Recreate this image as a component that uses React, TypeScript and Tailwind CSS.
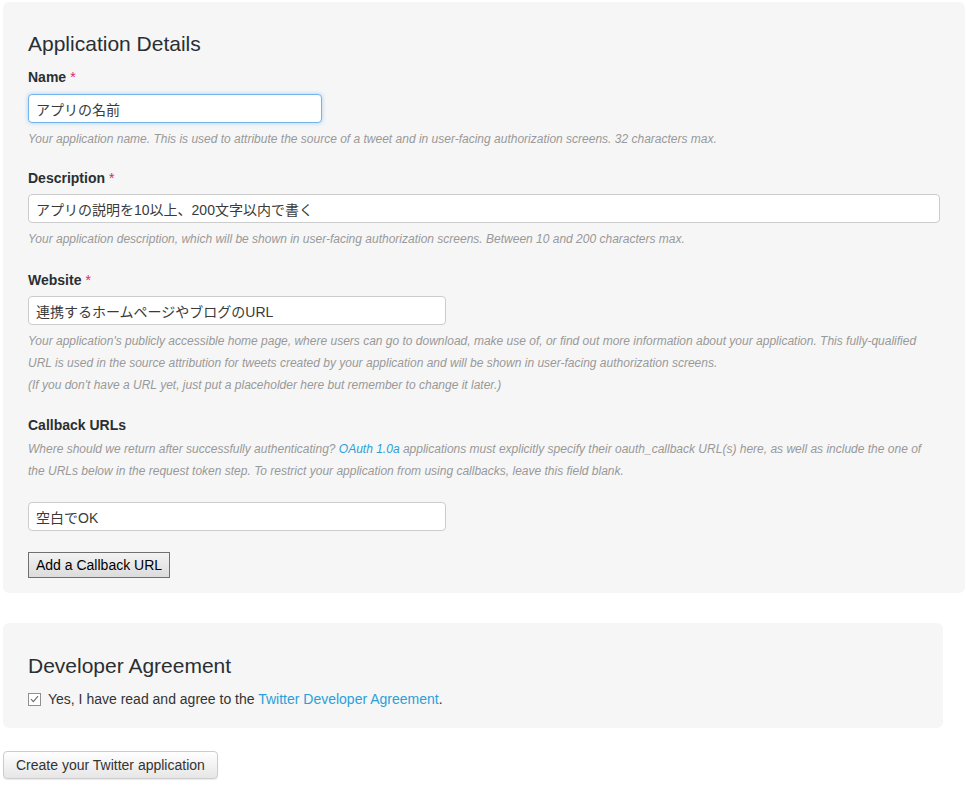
import * as React from "react";

const Label = ({ text, required }: { text: string; required?: boolean }) => (
  <div className="text-[14px] leading-[20px] font-bold text-[#292f33]">
    {text}
    {required && <span className="ml-[4px] font-normal text-[#e0245e]">*</span>}
  </div>
);

const TextBox = ({ value, width, focused }: { value: string; width: string; focused?: boolean }) => (
  <input
    type="text"
    readOnly
    value={value}
    className={`${width} block h-[29px] rounded-[4px] border bg-white px-[7px] text-[14px] text-[#3a3a3a] outline-none ${
      focused ? "border-[#74b4ec] shadow-[0_0_4px_rgba(102,175,233,0.55)]" : "border-[#cccccc]"
    }`}
  />
);

const Help = ({ children }: { children: React.ReactNode }) => (
  <p className="mt-[5px] text-[12px] leading-[22px] italic text-[#999999]">{children}</p>
);

export default function App() {
  return (
    <div className="min-h-screen bg-white pt-[2px] pl-[3px] font-['Liberation_Sans','Noto_Sans_CJK_JP',sans-serif]">
      <section className="w-[962px] rounded-[6px] bg-[#f6f6f6] px-[25px] pt-[30px] pb-[15px]">
        <h2 className="text-[21px] leading-[24px] text-[#292f33]">Application Details</h2>

        <div className="mt-[11px]">
          <Label text="Name" required />
          <div className="mt-[7px]">
            <TextBox value="アプリの名前" width="w-[294px]" focused />
          </div>
          <Help>
            Your application name. This is used to attribute the source of a tweet and in user-facing authorization screens. 32 characters max.
          </Help>
        </div>

        <div className="mt-[18px]">
          <Label text="Description" required />
          <div className="mt-[6px]">
            <TextBox value="アプリの説明を10以上、200文字以内で書く" width="w-full" />
          </div>
          <Help>
            Your application description, which will be shown in user-facing authorization screens. Between 10 and 200 characters max.
          </Help>
        </div>

        <div className="mt-[20px]">
          <Label text="Website" required />
          <div className="mt-[6px]">
            <TextBox value="連携するホームページやブログのURL" width="w-[418px]" />
          </div>
          <Help>
            Your application's publicly accessible home page, where users can go to download, make use of, or find out more information about your application. This fully-qualified
            <br />
            URL is used in the source attribution for tweets created by your application and will be shown in user-facing authorization screens.
            <br />
            (If you don't have a URL yet, just put a placeholder here but remember to change it later.)
          </Help>
        </div>

        <div className="mt-[19px]">
          <Label text="Callback URLs" />
          <p className="mt-[3px] text-[12px] leading-[22px] italic text-[#999999]">
            Where should we return after successfully authenticating?{" "}
            <a className="text-[#2b9fd9]">OAuth 1.0a</a> applications must explicitly specify their oauth_callback URL(s) here, as well as include the one of
            <br />
            the URLs below in the request token step. To restrict your application from using callbacks, leave this field blank.
          </p>
          <div className="mt-[20px]">
            <TextBox value="空白でOK" width="w-[418px]" />
          </div>
          <button className="mt-[21px] h-[26px] border border-[#707070] bg-gradient-to-b from-[#f3f3f3] to-[#dcdcdc] px-[7px] text-[14px] text-black">
            Add a Callback URL
          </button>
        </div>
      </section>

      <section className="mt-[30px] w-[940px] rounded-[6px] bg-[#f6f6f6] px-[25px] pt-[31px] pb-[19px]">
        <h2 className="text-[21px] leading-[24px] text-[#292f33]">Developer Agreement</h2>
        <div className="mt-[11px] flex items-center text-[14px] leading-[20px] text-[#333333]">
          <span className="flex h-[13px] w-[13px] items-center justify-center border border-[#8f8f8f] bg-white">
            <svg width="9" height="8" viewBox="0 0 9 8" fill="none">
              <path d="M1 4.2 L3.4 6.6 L8 1.2" stroke="#6b6b6b" strokeWidth="1.1" />
            </svg>
          </span>
          <span className="ml-[7px]">
            Yes, I have read and agree to the <a className="text-[#2b9fd9]">Twitter Developer Agreement</a>.
          </span>
        </div>
      </section>

      <button className="mt-[23px] h-[28px] rounded-[4px] border border-[#cccccc] bg-gradient-to-b from-white to-[#e6e6e6] px-[12px] text-[14px] text-[#333333] shadow-[0_1px_1px_rgba(0,0,0,0.08)]">
        Create your Twitter application
      </button>
    </div>
  );
}
